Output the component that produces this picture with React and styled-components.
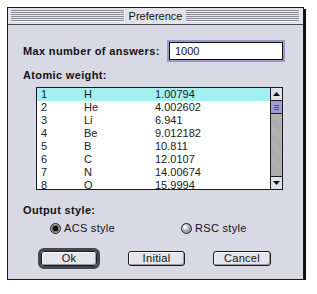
import React from "react"
import styled, { createGlobalStyle } from "styled-components"

const GlobalStyle = createGlobalStyle`
  body {
    margin: 0;
    background: #ffffff;
    font-family: "Liberation Sans", Arial, sans-serif;
  }
`

const elements = [
  ["1", "H", "1.00794"],
  ["2", "He", "4.002602"],
  ["3", "Li", "6.941"],
  ["4", "Be", "9.012182"],
  ["5", "B", "10.811"],
  ["6", "C", "12.0107"],
  ["7", "N", "14.00674"],
  ["8", "O", "15.9994"],
]

const Window = styled.div`
  margin: 7px 0 0 7px;
  width: 295px;
  height: 271px;
  border: 1px solid #1a1a1a;
  box-shadow: 2px 2px 0 #111;
  background: #d9d9e6;
  display: flex;
  flex-direction: column;
`

const TitleBar = styled.div`
  height: 16px;
  border-bottom: 1px solid #4a4a55;
  background: #e2e2ea;
  display: flex;
  align-items: center;
  padding: 0 3px;
`

const Stripes = styled.div`
  flex: 1;
  height: 11px;
  background: repeating-linear-gradient(to bottom, #8c8c98 0 1px, #e8e8ee 1px 2px);
  border-right: 1px solid #f4f4f8;
  border-bottom: 1px solid #f4f4f8;
`

const Title = styled.span`
  font-size: 11px;
  line-height: 16px;
  color: #111;
  padding: 0 4px;
`

const Content = styled.div`
  padding: 15px 18px 0 15px;
  display: flex;
  flex-direction: column;
`

const FieldRow = styled.div`
  display: flex;
  align-items: center;
  justify-content: space-between;
  height: 22px;
`

const Label = styled.div`
  font-size: 11px;
  font-weight: bold;
  line-height: 12px;
  letter-spacing: 0.35px;
  color: #111;
  margin-top: ${p => p.$top || 0}px;
`

const TextBox = styled.div`
  width: 107px;
  height: 16px;
  border: 1px solid #111;
  box-shadow: 0 0 0 2px #9a9ac4;
  margin-right: 2px;
  background: #fff;
  font-size: 11px;
  line-height: 16px;
  padding-left: 5px;
  box-sizing: content-box;
  color: #111;
`

const List = styled.div`
  margin: 6px 0 0 13px;
  width: 245px;
  height: 101px;
  border: 1px solid #1a1a1a;
  background: #fff;
  display: flex;
  overflow: hidden;
`

const Rows = styled.div`
  flex: 1;
  display: flex;
  flex-direction: column;
`

const Row = styled.div`
  display: grid;
  grid-template-columns: 43px 71px 1fr;
  height: 13px;
  flex-shrink: 0;
  padding-left: 4px;
  font-size: 11px;
  line-height: 13px;
  color: #222;
  background: ${p => (p.$selected ? "#a4f0f0" : "#fff")};
`

const ScrollBar = styled.div`
  width: 11px;
  border-left: 1px solid #1a1a1a;
  display: flex;
  flex-direction: column;
  background: repeating-linear-gradient(45deg, #a9a9a9 0 1px, #b4b4b4 1px 2px);
`

const Arrow = styled.div`
  height: 12px;
  background: #e0e0ea;
  border-bottom: ${p => (p.$down ? "none" : "1px solid #1a1a1a")};
  border-top: ${p => (p.$down ? "1px solid #1a1a1a" : "none")};
  display: flex;
  align-items: center;
  justify-content: center;
  margin-top: ${p => (p.$down ? "auto" : "0")};
`

const Thumb = styled.div`
  height: 12px;
  background: #9e9ed6;
  border-bottom: 1px solid #1a1a1a;
  display: flex;
  flex-direction: column;
  justify-content: center;
  align-items: center;
  gap: 1px;

  span {
    width: 5px;
    height: 1px;
    background: #50508a;
  }
`

const RadioRow = styled.div`
  display: flex;
  align-items: center;
  margin: 6px 0 0 27px;
  height: 12px;
`

const RadioItem = styled.label`
  display: flex;
  align-items: center;
  gap: 3px;
  width: ${p => p.$width || "auto"};
  font-size: 11px;
  letter-spacing: 0.3px;
  color: #111;
`

const RadioDot = styled.span`
  width: 9px;
  height: 9px;
  border-radius: 50%;
  border: 1px solid #222;
  background: ${p =>
    p.$checked
      ? "radial-gradient(circle at 50% 50%, #111 0 2.5px, #777 3px 4px, #aaa 4px)"
      : "radial-gradient(circle at 35% 35%, #ffffff 0 1px, #d4d4dc 2px, #9a9aa4 5px)"};
`

const ButtonRow = styled.div`
  display: flex;
  align-items: center;
  gap: 28px;
  margin: 14px 0 0 15px;
  height: 21px;
`

const DefaultRing = styled.div`
  border: 3px solid #46464f;
  border-radius: 6px;
  display: flex;
`

const Button = styled.button`
  width: ${p => p.$width}px;
  height: 15px;
  padding: 0;
  border: 1px solid #1a1a1a;
  border-radius: 3px;
  background: #e4e4ec;
  box-shadow: inset -1px -1px 0 #9a9aa6, inset 1px 1px 0 #fafaff;
  font-family: "Liberation Sans", Arial, sans-serif;
  font-size: 11px;
  line-height: 13px;
  letter-spacing: 0.3px;
  color: #111;
`

const ArrowIcon = ({ down }) => (
  <svg width="7" height="4" viewBox="0 0 7 4">
    <path d={down ? "M0 0h7L3.5 4z" : "M0 4h7L3.5 0z"} fill="#111" />
  </svg>
)

const App = () => (
  <>
    <GlobalStyle />
    <Window>
      <TitleBar>
        <Stripes />
        <Title>Preference</Title>
        <Stripes />
      </TitleBar>
      <Content>
        <FieldRow>
          <Label>Max number of answers:</Label>
          <TextBox>1000</TextBox>
        </FieldRow>
        <Label $top={7}>Atomic weight:</Label>
        <List>
          <Rows>
            {elements.map(([n, sym, w], i) => (
              <Row key={n} $selected={i === 0}>
                <span>{n}</span>
                <span>{sym}</span>
                <span>{w}</span>
              </Row>
            ))}
          </Rows>
          <ScrollBar>
            <Arrow>
              <ArrowIcon />
            </Arrow>
            <Thumb>
              <span />
              <span />
              <span />
            </Thumb>
            <Arrow $down>
              <ArrowIcon down />
            </Arrow>
          </ScrollBar>
        </List>
        <Label $top={14}>Output style:</Label>
        <RadioRow>
          <RadioItem $width="131px">
            <RadioDot $checked />
            ACS style
          </RadioItem>
          <RadioItem>
            <RadioDot />
            RSC style
          </RadioItem>
        </RadioRow>
        <ButtonRow>
          <DefaultRing>
            <Button $width={56}>Ok</Button>
          </DefaultRing>
          <Button $width={57}>Initial</Button>
          <Button $width={58}>Cancel</Button>
        </ButtonRow>
      </Content>
    </Window>
  </>
)

export default App
